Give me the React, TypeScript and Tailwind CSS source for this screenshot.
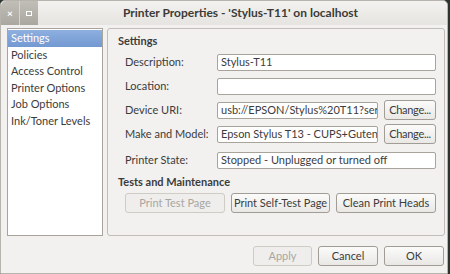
import React from "react";

const font = { fontFamily: "Lato, 'Open Sans', sans-serif" };

const navItems = [
  "Settings",
  "Policies",
  "Access Control",
  "Printer Options",
  "Job Options",
  "Ink/Toner Levels",
];

function Field({ value }: { value: string }) {
  return (
    <div className="flex-1 min-w-0 h-[17px] bg-white border border-[#a8a49c] rounded-[2px] px-[3px] flex items-center overflow-hidden whitespace-nowrap text-[#3c3c3c]">
      {value}
    </div>
  );
}

function Button({
  label,
  disabled,
  className = "",
}: {
  label: string;
  disabled?: boolean;
  className?: string;
}) {
  return (
    <div
      className={`h-[20px] shrink-0 flex items-center justify-center rounded-[3px] border whitespace-nowrap overflow-hidden ${
        disabled
          ? "border-[#cfccc6] bg-[#efeeec] text-[#a8a6a2]"
          : "border-[#a19d96] bg-gradient-to-b from-[#fbfbfa] to-[#e9e8e5] text-[#3c3c3c]"
      } ${className}`}
    >
      {label}
    </div>
  );
}

function Row({
  label,
  value,
  button,
  className = "",
}: {
  label: string;
  value: string;
  button?: boolean;
  className?: string;
}) {
  return (
    <div className={`flex items-center pl-[17px] pr-[8px] h-[20px] ${className}`}>
      <div className="w-[92px] shrink-0 whitespace-nowrap">{label}</div>
      <Field value={value} />
      {button && (
        <Button label="Change..." className="w-[52px] ml-[6px] tracking-[-0.3px]" />
      )}
    </div>
  );
}

export default function App() {
  return (
    <div className="w-[450px] h-[274px] bg-[#2c3430] overflow-hidden" style={font}>
      <div className="w-[448px] h-[274px] bg-[#f2f1f0] border border-[#b7b4ad] rounded-t-[5px] flex flex-col text-[11px] text-[#3c3c3c]">
        {/* title bar */}
        <div className="h-[24px] shrink-0 flex items-center bg-gradient-to-b from-[#f3f2f0] to-[#e6e4e0] rounded-t-[5px]">
          <div className="flex h-full rounded-tl-[5px] overflow-hidden">
            <div className="w-[18px] h-full bg-gradient-to-b from-[#c1beb8] to-[#aaa79f] flex items-center justify-center text-white text-[10px] font-bold">
              ×
            </div>
            <div className="w-px h-full bg-[#d6d4cf]" />
            <div className="w-[18px] h-full bg-gradient-to-b from-[#c1beb8] to-[#aaa79f] flex items-center justify-center">
              <div className="w-[6px] h-[5px] border border-white" />
            </div>
          </div>
          <div className="flex-1 text-center font-bold text-[12px] text-[#3c3b37] pr-[4px] whitespace-nowrap">
            Printer Properties - 'Stylus-T11' on localhost
          </div>
        </div>

        {/* body */}
        <div className="flex gap-[4px] pl-[6px] pr-[2px] pt-[3px] h-[211px] shrink-0">
          <div className="w-[96px] shrink-0 bg-white border border-[#a8a49c] py-[1px] overflow-hidden">
            {navItems.map((item, i) => (
              <div
                key={item}
                className={`h-[16.5px] flex items-center pl-[3px] whitespace-nowrap ${
                  i === 0 ? "bg-gradient-to-b from-[#8eafdf] to-[#7399d2] text-white" : ""
                }`}
              >
                {item}
              </div>
            ))}
          </div>

          <div className="flex-1 min-w-0 border border-[#c2beb7] rounded-[3px] bg-[#f2f1f0] pt-[5px]">
            <div className="font-bold pl-[10px] h-[15px] flex items-center">Settings</div>
            <Row label="Description:" value="Stylus-T11" className="mt-[3px]" />
            <Row label="Location:" value="" className="mt-[4px]" />
            <Row
              label="Device URI:"
              value="usb://EPSON/Stylus%20T11?seria"
              button
              className="mt-[4px]"
            />
            <Row
              label="Make and Model:"
              value="Epson Stylus T13 - CUPS+Gutenpr"
              button
              className="mt-[4px]"
            />
            <Row
              label="Printer State:"
              value="Stopped - Unplugged or turned off"
              className="mt-[6px]"
            />
            <div className="font-bold pl-[10px] h-[15px] flex items-center mt-[5px]">
              Tests and Maintenance
            </div>
            <div className="flex gap-[6px] pl-[17px] pr-[8px] mt-[3px]">
              <Button label="Print Test Page" disabled className="w-[100px]" />
              <Button label="Print Self-Test Page" className="w-[99px]" />
              <Button label="Clean Print Heads" className="w-[100px]" />
            </div>
          </div>
        </div>

        {/* bottom buttons */}
        <div className="flex justify-end gap-[6px] pr-[3px] pt-[10px]">
          <Button label="Apply" disabled className="w-[59px]" />
          <Button label="Cancel" className="w-[60px]" />
          <Button label="OK" className="w-[60px]" />
        </div>
      </div>
    </div>
  );
}
